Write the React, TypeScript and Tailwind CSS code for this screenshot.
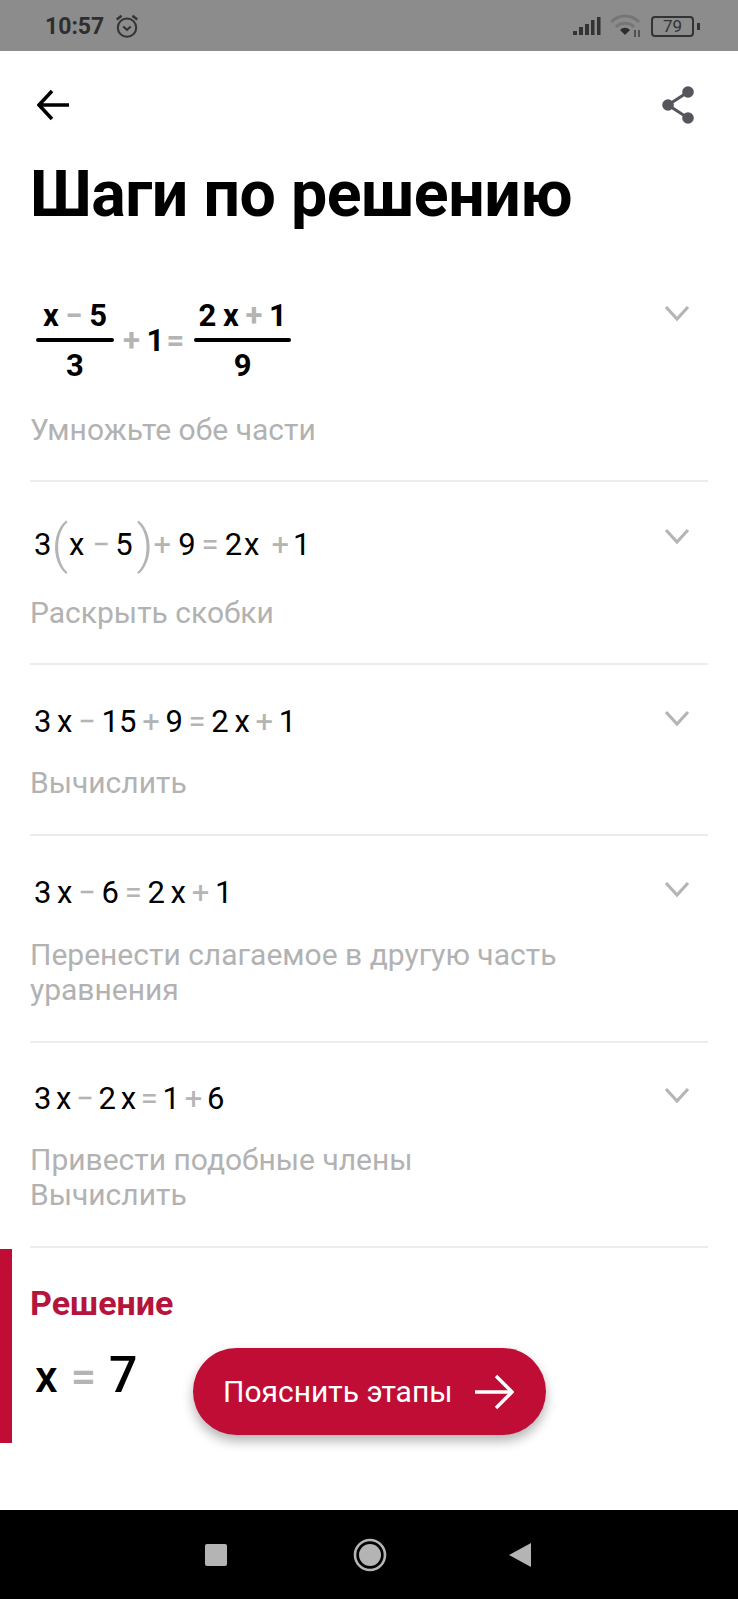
import React from "react";

const G = ({ c, className = "" }: { c: string; className?: string }) => (
  <span className={`text-[#b4b4b4] ${className}`}>{c}</span>
);

const Chevron = () => (
  <svg width="26" height="16" viewBox="0 0 26 16" fill="none" className="shrink-0">
    <path d="M2 2 L13 14 L24 2" stroke="#b5b5b5" strokeWidth="3.2" />
  </svg>
);

function Row({ math, hint, pt, pb = "pb-[33px]", gap, chev = "pt-[7px]" }: { math: React.ReactNode; hint: string[]; pt: string; pb?: string; gap: string; chev?: string }) {
  return (
    <div className={`flex justify-between border-b-2 border-[#ececec] ${pb} ${pt}`}>
      <div>
        {math}
        <div className={`text-[30px] leading-[35px] text-[#b2b2b2] ${gap}`}>
          {hint.map((h) => (
            <div key={h}>{h}</div>
          ))}
        </div>
      </div>
      <div className={`pr-[18px] ${chev}`}>
        <Chevron />
      </div>
    </div>
  );
}

const M = ({ children, spacing = "[word-spacing:-2px]" }: { children: React.ReactNode; spacing?: string }) => (
  <div className={`flex items-center h-[38px] pl-[4px] text-[31px] leading-[38px] text-black whitespace-pre ${spacing}`}>{children}</div>
);

const Frac = ({ top, bottom, w }: { top: React.ReactNode; bottom: string; w: string }) => (
  <div className={`flex flex-col items-center ${w}`}>
    <div className="h-[44px] leading-[44px] whitespace-pre">{top}</div>
    <div className="h-[4px] w-full bg-black rounded-full" />
    <div className="h-[47px] leading-[47px]">{bottom}</div>
  </div>
);

const Paren = ({ c, className = "" }: { c: string; className?: string }) => (
  <span className={`text-[#b4b4b4] text-[52px] font-light leading-[38px] ${className}`}>{c}</span>
);

export default function App() {
  return (
    <div className="w-[738px] h-[1599px] flex flex-col bg-white overflow-hidden font-['Roboto',sans-serif]">
      <div className="h-[51px] bg-[#8c8c8c] flex items-center justify-between pl-[45px] pr-[38px] pt-[1px] text-[#2e2e2e]">
        <div className="flex items-center gap-[10px]">
          <span className="text-[23px] font-bold leading-none">10:57</span>
          <svg width="26" height="26" viewBox="0 0 24 24" fill="none" stroke="#333" strokeWidth="1.9">
            <circle cx="12" cy="13.5" r="8.5" />
            <path d="M8.5 12.5 L12 15.5 L15.5 12.5" />
            <path d="M2.5 6 L7 2.5 M21.5 6 L17 2.5" strokeWidth="2.2" />
          </svg>
        </div>
        <div className="flex items-center gap-[9px]">
          <svg width="28" height="20" viewBox="0 0 28 20" fill="#333">
            <rect x="0" y="15" width="4" height="4" />
            <rect x="6" y="11" width="4" height="8" />
            <rect x="12" y="8" width="4" height="11" />
            <rect x="18" y="4" width="3.5" height="15" />
            <rect x="24" y="1" width="3.5" height="18" />
          </svg>
          <svg width="32" height="24" viewBox="0 0 32 24" fill="none">
            <path d="M1 8 C9 0 21 0 29 8" stroke="#767676" strokeWidth="3" />
            <path d="M6 13 C11 8 19 8 24 13" stroke="#767676" strokeWidth="3" />
            <path d="M10 16 C13 13 17 13 20 16 L15 21 Z" fill="#2e2e2e" />
            <path d="M25 16 V23 M29 16 V23" stroke="#444" strokeWidth="1.6" />
          </svg>
          <div className="flex items-center gap-[3px]">
            <div className="w-[43px] h-[21px] border-[2.5px] border-[#333] rounded-[4px] flex items-center justify-center text-[17px] leading-none text-[#333]">79</div>
            <div className="w-[3px] h-[7px] bg-[#333]" />
          </div>
        </div>
      </div>

      <div className="flex-1 relative flex flex-col">
        <div className="flex items-center justify-between pl-[37px] pr-[43px] pt-[35px]">
          <svg width="32" height="32" viewBox="0 0 32 32" fill="none" stroke="#000" strokeWidth="3.5">
            <path d="M32 16 H2 M15 2 L2 16 L15 30" />
          </svg>
          <svg width="34" height="38" viewBox="0 0 34 38" fill="#55565c">
            <path d="M27 6 L7 19 L27 32" fill="none" stroke="#55565c" strokeWidth="3" />
            <circle cx="27" cy="6" r="5.8" />
            <circle cx="7" cy="19" r="5.8" />
            <circle cx="27" cy="32" r="5.8" />
          </svg>
        </div>

        <h1 className="pl-[30px] mt-[33px] text-[64.5px] leading-[74px] font-bold text-black tracking-[-0.5px]">Шаги по решению</h1>

        <div className="px-[30px] mt-[52px]">
          <Row
            pt="pt-[11px]"
            pb="pb-[33px]"
            gap="mt-[23px]"
            chev="pt-[11px]"
            hint={["Умножьте обе части"]}
            math={
              <div className="flex items-center pl-[6px] text-[31px] font-bold text-black whitespace-pre [word-spacing:-1px]">
                <Frac w="w-[78px]" bottom="3" top={<>x <G c="−" /> 5</>} />
                <span className="px-[9px]"><G c="+" /> 1</span>
                <G c="=" className="-ml-[7px] mr-[10px]" />
                <Frac w="w-[97px]" bottom="9" top={<>2 x <G c="+" /> 1</>} />
              </div>
            }
          />
          <Row
            pt="pt-[39px]"
            gap="mt-[31px]"
            hint={["Раскрыть скобки"]}
            math={
              <div className="pt-[5px]">
                <M>
                  3<Paren c="(" /><span className="ml-[1px]">x</span><G c="−" className="ml-[8px]" /><span className="ml-[5px]">5</span><Paren c=")" className="ml-[4px]" /><G c="+" /><span className="ml-[7px]">9</span><G c="=" className="ml-[6px]" /><span className="ml-[6px]">2</span><span className="ml-[2px]">x</span><G c="+" className="ml-[12px]" /><span className="ml-[4px]">1</span>
                </M>
              </div>
            }
          />
          <Row
            pt="pt-[38px]"
            pb="pb-[34px]"
            gap="mt-[24px]"
            hint={["Вычислить"]}
            math={<M>3 x <G c="−" /> 15 <G c="+" /> 9 <G c="=" /> 2 x <G c="+" /> 1</M>}
          />
          <Row
            pt="pt-[38px]"
            pb="pb-[34px]"
            gap="mt-[25px]"
            hint={["Перенести слагаемое в другую часть", "уравнения"]}
            math={<M>3 x <G c="−" /> 6 <G c="=" /> 2 x <G c="+" /> 1</M>}
          />
          <Row
            pt="pt-[37px]"
            pb="pb-[34px]"
            gap="mt-[24px]"
            hint={["Привести подобные члены", "Вычислить"]}
            math={<M spacing="[word-spacing:-3px]">3 x <G c="−" /> 2 x <G c="=" /> 1 <G c="+" /> 6</M>}
          />
        </div>

        <div className="border-l-[12px] border-[#c00d36] h-[194px] mt-[1px] pl-[18px] pt-[34px]">
          <div className="text-[34px] leading-[40px] font-bold text-[#b5143c]">Решение</div>
          <div className="flex items-baseline gap-[13px] pl-[5px] mt-[24px] text-[45px] leading-[56px] font-medium text-black">
            <span>x</span>
            <G c="=" />
            <span className="text-[50px] font-medium">7</span>
          </div>
        </div>

        <div className="absolute left-[193px] top-[1297px] w-[353px] h-[87px] rounded-full bg-[#c00d36] shadow-[0_6px_12px_rgba(0,0,0,0.3)] flex items-center justify-between pl-[30px] pr-[32px] text-white">
          <span className="text-[30px]">Пояснить этапы</span>
          <svg width="40" height="36" viewBox="0 0 40 36" fill="none" stroke="#fff" strokeWidth="3.4">
            <path d="M1 18 H37 M22 2 L38 18 L22 34" />
          </svg>
        </div>
      </div>

      <div className="h-[89px] bg-black flex items-center pl-[205px]">
        <div className="w-[22px] h-[22px] bg-[#b4b4b4] rounded-[2px] mr-[126px]" />
        <svg width="34" height="34" viewBox="0 0 34 34" className="mr-[121px]">
          <circle cx="17" cy="17" r="15" fill="none" stroke="#b4b4b4" strokeWidth="2.6" />
          <circle cx="17" cy="17" r="11" fill="#b4b4b4" />
        </svg>
        <svg width="24" height="26" viewBox="0 0 24 26" fill="#b4b4b4">
          <path d="M23 1 V25 L1 13 Z" />
        </svg>
      </div>
    </div>
  );
}
